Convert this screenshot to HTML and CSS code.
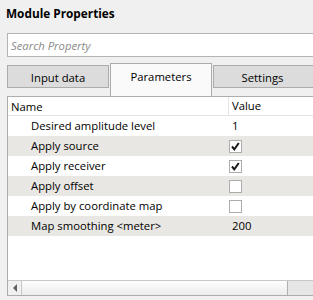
FILE: index.html
```html
<!DOCTYPE html>
<html lang="en">

<head>
    <meta charset="UTF-8">
    <meta name="viewport" content="width=device-width, initial-scale=1.0">
    <title>Module Properties</title>
    <link rel="stylesheet" href="styles.css">
</head>

<body>
    <div class="panel">
        <div class="title">Module Properties</div>

        <div class="search">
            <input type="text" placeholder="Search Property">
        </div>

        <div class="tabs">
            <div class="tab">Input data</div>
            <div class="tab active">Parameters</div>
            <div class="tab last">Settings</div>
        </div>

        <div class="grid">
            <div class="row head">
                <div class="name">Name</div>
                <div class="value">Value</div>
            </div>
            <div class="row">
                <div class="name">Desired amplitude level</div>
                <div class="value">1</div>
            </div>
            <div class="row alt">
                <div class="name">Apply source</div>
                <div class="value">
                    <span class="check">
                        <svg width="11" height="11" viewBox="0 0 11 11">
                            <path d="M2 5.5 L4.3 8.3 L8.8 2" fill="none" stroke="#1a1a1a" stroke-width="2" />
                        </svg>
                    </span>
                </div>
            </div>
            <div class="row">
                <div class="name">Apply receiver</div>
                <div class="value">
                    <span class="check">
                        <svg width="11" height="11" viewBox="0 0 11 11">
                            <path d="M2 5.5 L4.3 8.3 L8.8 2" fill="none" stroke="#1a1a1a" stroke-width="2" />
                        </svg>
                    </span>
                </div>
            </div>
            <div class="row alt">
                <div class="name">Apply offset</div>
                <div class="value"><span class="check"></span></div>
            </div>
            <div class="row">
                <div class="name">Apply by coordinate map</div>
                <div class="value"><span class="check"></span></div>
            </div>
            <div class="row alt">
                <div class="name">Map smoothing &lt;meter&gt;</div>
                <div class="value">200</div>
            </div>

            <div class="empty"></div>

            <div class="hscroll">
                <div class="arrowBtn">
                    <svg width="6" height="8" viewBox="0 0 6 8">
                        <path d="M5 0 L1 4 L5 8 Z" fill="#606060" />
                    </svg>
                </div>
                <div class="thumb"></div>
                <div class="track"></div>
            </div>
        </div>
    </div>
</body>

</html>
```

FILE: styles.css
```css
* {
    margin: 0;
    padding: 0;
    box-sizing: border-box;
}

html,
body {
    width: 100%;
    height: 100%;
    overflow: hidden;
}

body {
    background-color: #f0f0f0;
    font-family: "Open Sans", "Noto Sans", sans-serif;
    font-size: 11.3px;
    color: #000;
}

.panel {
    display: flex;
    flex-direction: column;
    width: 100%;
    padding-left: 7px;
}

.title {
    height: 33px;
    padding-top: 5px;
    margin-left: -1px;
    font-weight: bold;
    font-size: 11.8px;
}

.search {
    height: 24px;
    border: 1px solid #b4b4b4;
    border-right: none;
    background-color: #fff;
}

.search input {
    width: 100%;
    height: 100%;
    border: none;
    outline: none;
    padding-left: 3px;
    font-family: inherit;
    font-size: 11.3px;
    background: transparent;
}

.search input::placeholder {
    color: #8a8a8a;
    font-style: italic;
}

.tabs {
    display: flex;
    align-items: flex-end;
    gap: 1px;
    height: 32px;
    margin-top: 7px;
}

.tab {
    width: 102px;
    height: 23px;
    margin-bottom: 8px;
    border: 1px solid #acacac;
    background-color: #dcdcdc;
    text-align: center;
    line-height: 24px;
}

.tab.last {
    flex: 1;
    border-right: none;
    padding-right: 2px;
}

.tab.active {
    height: 33px;
    margin-bottom: 0;
    border-bottom: none;
    background-color: #fafafa;
    line-height: 26px;
    padding-bottom: 7px;
}

.grid {
    display: flex;
    flex-direction: column;
    border: 1px solid #adadad;
    border-right: none;
    background-color: #fff;
    height: 200px;
}

.row {
    display: flex;
    height: 20px;
    line-height: 20px;
}

.row.alt {
    background-color: #e9e7e3;
}

.row.head {
    height: 19px;
    border-bottom: 1px solid #e4e4e4;
    background-color: #fff;
}

.name {
    width: 220px;
    padding-left: 23px;
    white-space: nowrap;
}

.head .name {
    padding-left: 3px;
}

.value {
    flex: 1;
    padding-left: 4px;
    display: flex;
    align-items: center;
}

.head .value {
    border-left: 1px solid #e4e4e4;
    padding-left: 3px;
}

.check {
    display: flex;
    align-items: center;
    justify-content: center;
    width: 13px;
    height: 13px;
    border: 1px solid #acacac;
    background-color: #fff;
    margin-left: -3px;
}

.empty {
    flex: 1;
}

.hscroll {
    display: flex;
    height: 15px;
    border-top: 1px solid #c8c8c8;
}

.arrowBtn {
    width: 14px;
    display: flex;
    align-items: center;
    justify-content: center;
    background-color: #f0f0f0;
    border-right: 1px solid #c8c8c8;
}

.thumb {
    width: 266px;
    border-right: 1px solid #b0b0b0;
    background: linear-gradient(#fdfdfd, #ececec);
}

.track {
    flex: 1;
    background-color: #e6e6e6;
}
```
